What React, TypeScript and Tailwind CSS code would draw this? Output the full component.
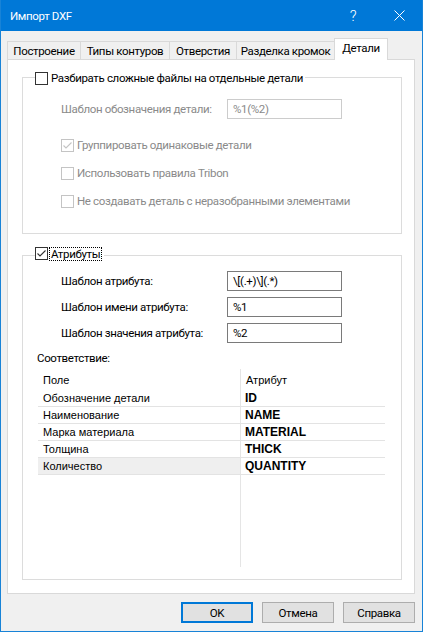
import type {ReactNode} from 'react';

const ui = "font-['Roboto',sans-serif]";
const grid = "font-['Liberation_Sans',Arial,sans-serif]";

function CheckBox({checked, disabled}: {checked?: boolean; disabled?: boolean}) {
    const color = disabled ? '#c4c4c4' : '#333333';
    return (
        <span
            className={`flex size-[13px] shrink-0 items-center justify-center border bg-white ${disabled ? 'border-[#c4c4c4]' : 'border-[#333333]'}`}
        >
            {checked && (
                <svg width="11" height="11" viewBox="0 0 11 11">
                    <path d="M1.5 5.5 L4 8 L9.5 2.5" fill="none" stroke={color} strokeWidth="1.1"/>
                </svg>
            )}
        </span>
    );
}

function Option({label, checked, disabled}: {label: string; checked?: boolean; disabled?: boolean}) {
    return (
        <div className="flex h-[16px] items-center gap-[3px] whitespace-nowrap">
            <CheckBox checked={checked} disabled={disabled}/>
            <span className={disabled ? 'text-[#8a8a8a]' : 'text-black'}>{label}</span>
        </div>
    );
}

function Field({label, value, disabled}: {label: string; value: string; disabled?: boolean}) {
    return (
        <div className="grid h-[20px] grid-cols-[166px_115px] items-center whitespace-nowrap">
            <span className={disabled ? 'text-[#8a8a8a]' : 'text-black'}>{label}</span>
            <div
                className={`flex h-[20px] items-center border bg-white px-[5px] ${disabled ? 'border-[#cccccc] text-[#8a8a8a]' : 'border-[#7a7a7a] text-black'}`}
            >
                {value}
            </div>
        </div>
    );
}

function Group({legend, className, children}: {legend: ReactNode; className: string; children: ReactNode}) {
    return (
        <div className={`relative border border-[#dcdcdc] ${className}`}>
            <div className="absolute left-[12px] top-[-8px] flex h-[16px] items-center bg-white pr-[2px]">{legend}</div>
            {children}
        </div>
    );
}

const rows = [
    ['Обозначение детали', 'ID'],
    ['Наименование', 'NAME'],
    ['Марка материала', 'MATERIAL'],
    ['Толщина', 'THICK'],
    ['Количество', 'QUANTITY'],
];

const tabs = [
    {label: 'Построение', w: 'w-[74px]'},
    {label: 'Типы контуров', w: 'w-[90px]'},
    {label: 'Отверстия', w: 'w-[68px]'},
    {label: 'Разделка кромок', w: 'w-[99px]'},
];

export default function App() {
    return (
        <div className={`flex h-[632px] w-[423px] flex-col border border-t-0 border-[#1883d7] bg-[#f0f0f0] text-[11.5px] leading-[16px] tracking-[-0.35px] ${ui}`}>
            {/* title bar */}
            <div className="flex h-[31px] shrink-0 items-center bg-[#0078d7] text-white">
                <span className="flex-1 pl-[9px]">Импорт DXF</span>
                <span className="flex h-[31px] w-[46px] items-center justify-center text-[15px] font-light">?</span>
                <span className="flex h-[31px] w-[46px] items-center justify-center">
                    <svg width="11" height="11" viewBox="0 0 11 11">
                        <path d="M0.5 0.5 L10.5 10.5 M10.5 0.5 L0.5 10.5" stroke="#ffffff" strokeWidth="1"/>
                    </svg>
                </span>
            </div>

            {/* tabs */}
            <div className="ml-[6px] mt-[7px] flex h-[21px] items-end whitespace-nowrap">
                {tabs.map((tab, i) => (
                    <div
                        key={tab.label}
                        className={`flex h-[18px] items-center justify-center border border-b-0 border-[#d9d9d9] bg-[#f0f0f0] ${tab.w} ${i > 0 ? '-ml-px' : ''}`}
                    >
                        {tab.label}
                    </div>
                ))}
                <div className="relative z-10 -mb-px -ml-px flex h-[22px] w-[54px] items-start justify-center border border-b-0 border-[#d9d9d9] bg-white pt-[1px]">
                    Детали
                </div>
            </div>

            {/* tab page */}
            <div className="ml-[6px] flex h-[535px] w-[408px] flex-col border border-[#d9d9d9] bg-white px-[14px] pt-[17px]">
                <Group
                    className="h-[157px] w-[380px]"
                    legend={<Option label="Разбирать сложные файлы на отдельные детали"/>}
                >
                    <div className="flex flex-col pl-[38px] pt-[21px]">
                        <Field label="Шаблон обозначения детали:" value="%1(%2)" disabled/>
                        <div className="mt-[18px] flex flex-col gap-[12px]">
                            <Option label="Группировать одинаковые детали" checked disabled/>
                            <Option label="Использовать правила Tribon" disabled/>
                            <Option label="Не создавать деталь с неразобранными элементами" disabled/>
                        </div>
                    </div>
                </Group>

                <Group
                    className="mt-[21px] h-[325px] w-[380px]"
                    legend={
                        <div className="-mt-[5px] flex items-center gap-[1px]">
                            <CheckBox checked/>
                            <span className="border border-dotted border-black px-[1px] leading-[12px]">Атрибуты</span>
                        </div>
                    }
                >
                    <div className="flex flex-col pl-[38px] pt-[15px]">
                        <div className="flex flex-col gap-[6px]">
                            <Field label="Шаблон атрибута:" value="\[(.+)\](.*)"/>
                            <Field label="Шаблон имени атрибута:" value="%1"/>
                            <Field label="Шаблон значения атрибута:" value="%2"/>
                        </div>
                    </div>
                    <div className="mt-[7px] pl-[14px]">Соответствие:</div>
                    <div className={`ml-[15px] mt-[3px] h-[198px] w-[347px] ${grid} text-[11px] tracking-normal`}>
                        <div className="flex h-[21px]">
                            <div className="flex w-[202px] items-center pl-[5px] pt-[1px]">Поле</div>
                            <div className="flex flex-1 items-center border-l border-[#e5e5e5] pl-[5px] pt-[1px]">Атрибут</div>
                        </div>
                        {rows.map(([name, attr], i) => (
                            <div key={name} className="flex h-[17px] border-b border-[#e3e3e3]">
                                <div className={`flex w-[202px] items-center pl-[5px] ${i === rows.length - 1 ? 'bg-[#efefef]' : ''}`}>{name}</div>
                                <div className="flex flex-1 items-center border-l border-[#e5e5e5] pl-[4px] text-[12px] font-bold">{attr}</div>
                            </div>
                        ))}
                        <div className="ml-[202px] h-[92px] border-l border-[#e5e5e5]"/>
                    </div>
                </Group>
            </div>

            {/* buttons */}
            <div className="mt-[8px] flex justify-end gap-[9px] pr-[7px]">
                <button className="flex h-[21px] w-[72px] items-center justify-center border-2 border-[#0078d7] bg-[#e1e1e1]">OK</button>
                <button className="flex h-[21px] w-[72px] items-center justify-center border border-[#adadad] bg-[#e1e1e1]">Отмена</button>
                <button className="flex h-[21px] w-[72px] items-center justify-center border border-[#adadad] bg-[#e1e1e1]">Справка</button>
            </div>
        </div>
    );
}
